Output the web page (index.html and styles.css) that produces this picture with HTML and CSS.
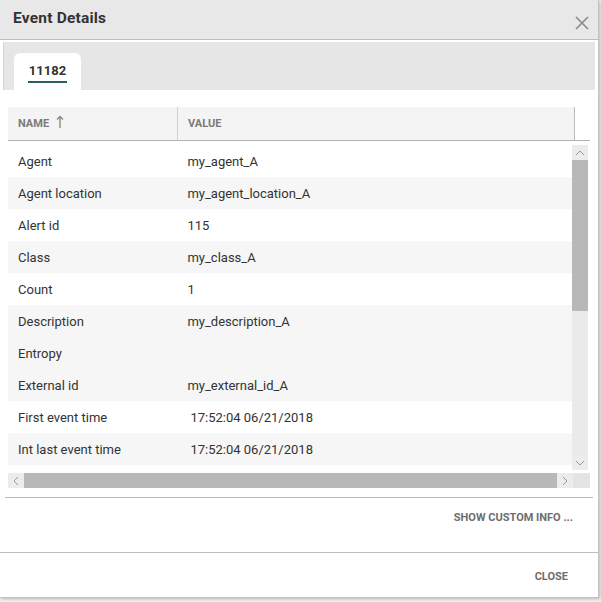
FILE: index.html
```html
<!DOCTYPE html>
<html>
<head>
<meta charset="utf-8">
<link rel="stylesheet" href="styles.css">
</head>
<body>
<div class="dialog">
  <div class="header">
    <span class="title">Event Details</span>
    <svg class="close-x" width="14" height="14" viewBox="0 0 14 14"><path d="M1 1 L13 13 M13 1 L1 13" stroke="#8a8a8a" stroke-width="1.6" fill="none"/></svg>
  </div>
  <div class="tabbar">
    <div class="tab"><span class="tab-label">11182</span></div>
  </div>
  <div class="grid">
    <div class="grid-head">
      <div class="hcell name-col">NAME
        <svg class="sort" width="8" height="14" viewBox="0 0 8 14"><path d="M4 13 V1.5 M1 4.5 L4 1.5 L7 4.5" stroke="#8a8a8a" stroke-width="1.4" fill="none"/></svg>
      </div>
      <div class="hcell value-col">VALUE</div>
    </div>
    <div class="grid-body">
      <div class="rows">
        <div class="row"><div class="c name-col">Agent</div><div class="c value-col">my_agent_A</div></div>
        <div class="row alt"><div class="c name-col">Agent location</div><div class="c value-col">my_agent_location_A</div></div>
        <div class="row"><div class="c name-col">Alert id</div><div class="c value-col">115</div></div>
        <div class="row alt"><div class="c name-col">Class</div><div class="c value-col">my_class_A</div></div>
        <div class="row"><div class="c name-col">Count</div><div class="c value-col">1</div></div>
        <div class="row alt"><div class="c name-col">Description</div><div class="c value-col">my_description_A</div></div>
        <div class="row hover"><div class="c name-col">Entropy</div><div class="c value-col"></div></div>
        <div class="row alt"><div class="c name-col">External id</div><div class="c value-col">my_external_id_A</div></div>
        <div class="row"><div class="c name-col">First event time</div><div class="c value-col time">17:52:04 06/21/2018</div></div>
        <div class="row alt"><div class="c name-col">Int last event time</div><div class="c value-col time">17:52:04 06/21/2018</div></div>
        <div class="row"></div>
      </div>
      <div class="vscroll">
        <div class="sb-btn">
          <svg width="10" height="6" viewBox="0 0 10 6"><path d="M1 5 L5 1 L9 5" stroke="#9a9a9a" stroke-width="1" fill="none"/></svg>
        </div>
        <div class="vthumb"></div>
        <div class="vtrack"></div>
        <div class="sb-btn">
          <svg width="10" height="6" viewBox="0 0 10 6"><path d="M1 1 L5 5 L9 1" stroke="#9a9a9a" stroke-width="1" fill="none"/></svg>
        </div>
      </div>
    </div>
    <div class="hscroll">
      <div class="hb-btn">
        <svg width="6" height="10" viewBox="0 0 6 10"><path d="M5 1 L1 5 L5 9" stroke="#9a9a9a" stroke-width="1" fill="none"/></svg>
      </div>
      <div class="hthumb"></div>
      <div class="hb-btn">
        <svg width="6" height="10" viewBox="0 0 6 10"><path d="M1 1 L5 5 L1 9" stroke="#9a9a9a" stroke-width="1" fill="none"/></svg>
      </div>
      <div class="corner"></div>
    </div>
  </div>
  <div class="custom">
    <span class="btn-text">SHOW CUSTOM INFO ...</span>
  </div>
  <div class="footer">
    <span class="btn-text close-btn">CLOSE</span>
  </div>
</div>
</body>
</html>
```

FILE: styles.css
```css
* { box-sizing: border-box; }
html, body {
  margin: 0;
  padding: 0;
}
body {
  background: #f2f2f2;
  font-family: Roboto, "Liberation Sans", sans-serif;
  color: #333;
  width: 601px;
  height: 602px;
  overflow: hidden;
}
.dialog {
  width: 599px;
  height: 598px;
  background: #fff;
  border-right: 1px solid #c4c4c4;
  border-bottom: 1px solid #c4c4c4;
  box-shadow: 1px 1px 3px rgba(0,0,0,0.25);
  display: flex;
  flex-direction: column;
}
.header {
  height: 40px;
  flex: none;
  background: #e8e8e8;
  border-bottom: 1px solid #bdbdbd;
  display: flex;
  align-items: flex-start;
  justify-content: space-between;
  padding: 9px 9px 0 13px;
}
.title {
  font-size: 15.5px;
  font-weight: 700;
  color: #333;
  line-height: 18px;
  letter-spacing: 0.2px;
}
.close-x {
  margin-top: 7px;
}
.tabbar {
  flex: none;
  margin: 2px 3px 0 3px;
  height: 48px;
  background: #e6e6e6;
  border-left: 1px solid #d6d6d6;
  padding: 11px 0 0 10px;
  display: flex;
}
.tab {
  width: 67px;
  height: 37px;
  background: #fff;
  border-radius: 6px 6px 0 0;
  display: flex;
  justify-content: center;
  padding-top: 10px;
}
.tab-label {
  font-size: 13px;
  font-weight: 700;
  color: #333;
  line-height: 16px;
  height: 20px;
  border-bottom: 2px solid #2c5d64;
  padding: 0 1px;
}
.grid {
  flex: none;
  margin: 17px 10px 0 8px;
}
.grid-head {
  display: flex;
  height: 34px;
  width: 582px;
  border-bottom: 1px solid #b3b3b3;
}
.hcell {
  background: #f4f4f4;
  font-size: 11px;
  font-weight: 700;
  color: #7a7a7a;
  display: flex;
  align-items: center;
  height: 33px;
  padding-left: 10px;
}
.hcell.name-col {
  width: 170px;
  border-right: 1px solid #d2d2d2;
}
.hcell.value-col {
  width: 397px;
  border-right: 1px solid #bcbcbc;
}
.sort {
  margin-left: 7px;
  margin-top: -3px;
}
.grid-body {
  display: flex;
  margin-top: 4px;
  height: 325px;
}
.rows {
  width: 566px;
  height: 325px;
  overflow: hidden;
}
.row {
  display: flex;
  height: 32px;
  align-items: center;
  font-size: 13px;
  color: #333;
  background: #fff;
}
.row.alt, .row.hover {
  background: #f6f6f6;
}
.c {
  padding-left: 10px;
  white-space: nowrap;
}
.c.name-col { width: 170px; }
.c.value-col { width: 396px; }
.c.time { padding-left: 13px; }
.vscroll {
  width: 16px;
  height: 325px;
  background: #eaeaea;
  display: flex;
  flex-direction: column;
}
.sb-btn {
  height: 15px;
  background: #ececec;
  display: flex;
  align-items: center;
  justify-content: center;
  flex: none;
}
.vthumb {
  height: 151px;
  background: #b8b8b8;
  flex: none;
}
.vtrack {
  flex: 1;
}
.hscroll {
  display: flex;
  height: 15px;
  margin-top: 3px;
  width: 582px;
  background: #ececec;
}
.hb-btn {
  width: 16px;
  display: flex;
  align-items: center;
  justify-content: center;
  flex: none;
}
.hthumb {
  width: 533px;
  background: #b8b8b8;
  flex: none;
}
.corner {
  width: 17px;
  background: #e4e4e4;
}
.custom {
  flex: none;
  margin: 9px 5px 0 5px;
  border-top: 1px solid #bdbdbd;
  height: 55px;
  display: flex;
  justify-content: flex-end;
  align-items: flex-start;
  padding: 13px 20px 0 0;
}
.btn-text {
  font-size: 11px;
  font-weight: 700;
  color: #6e6e6e;
  line-height: 14px;
}
.footer {
  flex: 1;
  border-top: 1px solid #bdbdbd;
  display: flex;
  justify-content: flex-end;
  align-items: flex-start;
  padding: 17px 30px 0 0;
}
```
